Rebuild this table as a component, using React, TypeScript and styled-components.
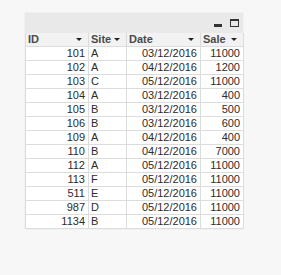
import React from 'react';
import styled, {createGlobalStyle} from 'styled-components';

const GlobalStyle = createGlobalStyle`
  body {
    margin: 0;
    background: #f7f7f7;
    font-family: "Liberation Sans", Arial, sans-serif;
  }
`;

const Page = styled.div`
  width: 281px;
  height: 275px;
  padding: 13px 0 0 25px;
  box-sizing: border-box;
`;

const Panel = styled.div`
  width: 218px;
  background: #ffffff;
  box-shadow: 0 0 1px rgba(0, 0, 0, 0.15);
`;

const Caption = styled.div`
  height: 20px;
  background: #e9e9e9;
  display: flex;
  justify-content: flex-end;
  align-items: flex-end;
  gap: 8px;
  padding: 0 4px 5px 0;
  box-sizing: border-box;
`;

const MinIcon = styled.div`
  width: 8px;
  height: 3px;
  background: #333;
  margin-bottom: 1px;
`;

const MaxIcon = styled.div`
  width: 9px;
  height: 8px;
  border: 1px solid #333;
  border-top-width: 2px;
  box-sizing: border-box;
  margin-bottom: 1px;
`;

const Table = styled.table`
  border-collapse: collapse;
  width: 218px;
  table-layout: fixed;
  font-size: 11px;
  color: #2c2c2c;
`;

const Head = styled.th<{w: number}>`
  width: ${p => p.w}px;
  height: 13px;
  padding: 0 0 0 2px;
  background: #f2f2f2;
  border: 1px solid #dcdcdc;
  border-top: none;
  text-align: left;
  font-weight: bold;
  color: #4a4a4a;
  line-height: 12px;
  box-sizing: border-box;
`;

const HeadInner = styled.div`
  display: flex;
  align-items: center;
  justify-content: space-between;
  padding-right: 6px;
`;

const Arrow = styled.span`
  width: 0;
  height: 0;
  border-left: 3px solid transparent;
  border-right: 3px solid transparent;
  border-top: 3px solid #222;
`;

const Cell = styled.td<{right?: boolean}>`
  height: 13px;
  padding: ${p => (p.right ? '0 3px 0 0' : '0 0 0 2px')};
  border: 1px solid #dcdcdc;
  text-align: ${p => (p.right ? 'right' : 'left')};
  line-height: 12px;
  white-space: nowrap;
  overflow: hidden;
`;

const rows: [number, string, string, number][] = [
  [101, 'A', '03/12/2016', 11000],
  [102, 'A', '04/12/2016', 1200],
  [103, 'C', '05/12/2016', 11000],
  [104, 'A', '03/12/2016', 400],
  [105, 'B', '03/12/2016', 500],
  [106, 'B', '03/12/2016', 600],
  [109, 'A', '04/12/2016', 400],
  [110, 'B', '04/12/2016', 7000],
  [112, 'A', '05/12/2016', 11000],
  [113, 'F', '05/12/2016', 11000],
  [511, 'E', '05/12/2016', 11000],
  [987, 'D', '05/12/2016', 11000],
  [1134, 'B', '05/12/2016', 11000],
];

const columns: [string, number][] = [
  ['ID', 63],
  ['Site', 38],
  ['Date', 74],
  ['Sale', 43],
];

const App = (): JSX.Element => (
  <Page>
    <GlobalStyle />
    <Panel>
      <Caption>
        <MinIcon />
        <MaxIcon />
      </Caption>
      <Table>
        <thead>
          <tr>
            {columns.map(([name, w]) => (
              <Head key={name} w={w}>
                <HeadInner>
                  {name}
                  <Arrow />
                </HeadInner>
              </Head>
            ))}
          </tr>
        </thead>
        <tbody>
          {rows.map(([id, site, date, sale]) => (
            <tr key={id}>
              <Cell right>{id}</Cell>
              <Cell>{site}</Cell>
              <Cell right>{date}</Cell>
              <Cell right>{sale}</Cell>
            </tr>
          ))}
        </tbody>
      </Table>
    </Panel>
  </Page>
);

export default App;
